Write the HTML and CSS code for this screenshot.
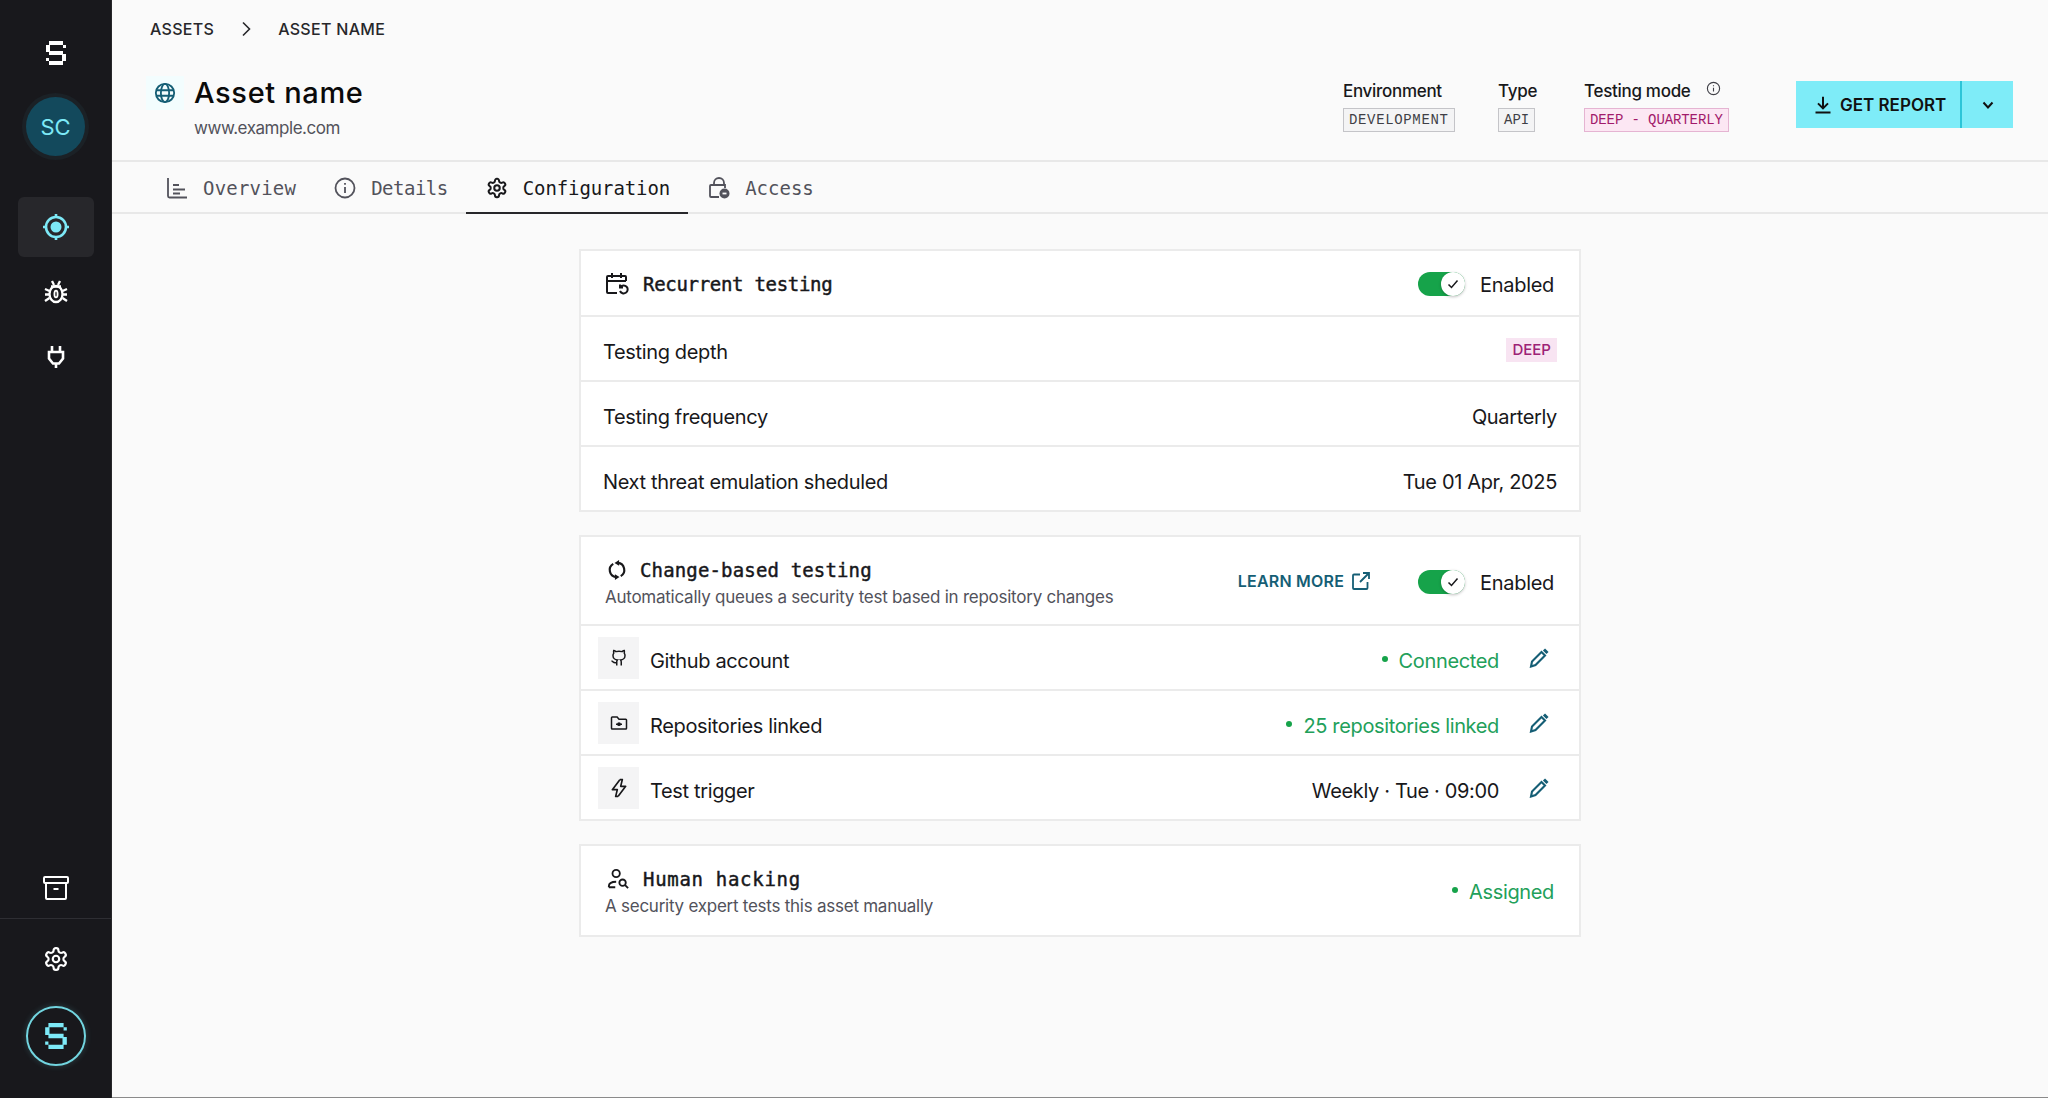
FILE: index.html
```html
<!DOCTYPE html>
<html lang="en">
<head>
<meta charset="utf-8">
<title>Asset name</title>
<link rel="stylesheet" href="styles.css">
</head>
<body>
<div class="app">
  <aside class="sidebar">
    <svg class="logo" viewBox="0 0 20 24" fill="#fff"><path d="M3 0h14v4H3zM17 4h3v3h-3zM0 4h4v7H0zM3 10h14v4H3zM16 13h4v7h-4zM0 17h3v3H0zM3 20h14v4H3z"/></svg>
    <div class="avatar">SC</div>
    <nav class="side-nav">
      <div class="side-item active">
        <svg viewBox="0 0 28 28" width="28" height="28" fill="none" stroke="#7de9f7" stroke-width="2.600"><circle cx="14" cy="14" r="10"/><circle cx="14" cy="14" r="5.500" fill="#7de9f7" stroke="none"/><path d="M14 1v3M14 24v3M1 14h3M24 14h3"/></svg>
      </div>
      <div class="side-item">
        <svg viewBox="0 0 24 24" width="24" height="24" fill="none" stroke="#fff" stroke-width="2.300"><path d="M8 1l2 4M16 1l-2 4"/><ellipse cx="12" cy="14" rx="6.500" ry="8"/><path d="M7 6.500h10M1 9l4.500 2M23 9l-4.500 2M1 14.500h4M23 14.500h-4M1 21l4.500-3M23 21l-4.500-3"/><ellipse cx="12" cy="14" rx="1.600" ry="3.400" stroke-width="1.800"/></svg>
      </div>
      <div class="side-item">
        <svg viewBox="0 0 24 24" width="24" height="24" fill="none" stroke="#fff" stroke-width="2.600"><path d="M8 1v6M16 1v6M5 7h14v6.500l-4 5h-6l-4-5zM12 18.500V23"/></svg>
      </div>
    </nav>
    <div class="side-archive">
      <svg viewBox="0 0 26 26" width="26" height="26" fill="none" stroke="#fff" stroke-width="2"><rect x="1" y="2" width="24" height="6" rx="1"/><path d="M3 8v15a1 1 0 0 0 1 1h18a1 1 0 0 0 1-1V8M10.500 14h5"/></svg>
    </div>
    <div class="side-bottom">
      <svg viewBox="0 0 24 24" width="26" height="26" fill="none" stroke="#fff" stroke-width="2" stroke-linejoin="round"><path d="M12.220 2h-.44a2 2 0 0 0-2 2v.18a2 2 0 0 1-1 1.730l-.43.25a2 2 0 0 1-2 0l-.15-.08a2 2 0 0 0-2.730.73l-.22.38a2 2 0 0 0 .73 2.730l.15.1a2 2 0 0 1 1 1.720v.51a2 2 0 0 1-1 1.740l-.15.09a2 2 0 0 0-.73 2.730l.22.38a2 2 0 0 0 2.730.73l.15-.08a2 2 0 0 1 2 0l.43.25a2 2 0 0 1 1 1.730V20a2 2 0 0 0 2 2h.44a2 2 0 0 0 2-2v-.18a2 2 0 0 1 1-1.730l.43-.25a2 2 0 0 1 2 0l.15.08a2 2 0 0 0 2.730-.73l.22-.39a2 2 0 0 0-.73-2.730l-.15-.08a2 2 0 0 1-1-1.740v-.5a2 2 0 0 1 1-1.740l.15-.09a2 2 0 0 0 .73-2.730l-.22-.38a2 2 0 0 0-2.730-.73l-.15.08a2 2 0 0 1-2 0l-.43-.25a2 2 0 0 1-1-1.730V4a2 2 0 0 0-2-2z"/><circle cx="12" cy="12" r="3"/></svg>
      <div class="brand-ring">
        <svg viewBox="0 0 20 24" width="22" height="26" fill="#7de9f7"><path d="M3 0h14v4H3zM17 4h3v3h-3zM0 4h4v7H0zM3 10h14v4H3zM16 13h4v7h-4zM0 17h3v3H0zM3 20h14v4H3z"/></svg>
      </div>
    </div>
  </aside>

  <main class="main">
    <div class="crumbs">
      <span>ASSETS</span>
      <svg viewBox="0 0 12 16" width="12" height="16" fill="none" stroke="#27272a" stroke-width="1.600"><path d="M3 1.500L9.500 8 3 14.500"/></svg>
      <span>ASSET NAME</span>
    </div>

    <header class="head">
      <div class="head-left">
        <div class="globe">
          <svg viewBox="0 0 24 24" width="22" height="22" fill="none" stroke="#155e75" stroke-width="2"><circle cx="12" cy="12" r="10"/><ellipse cx="12" cy="12" rx="4.500" ry="10"/><path d="M2.500 9h19M2.500 15h19"/></svg>
        </div>
        <div>
          <h1 class="title">Asset name</h1>
          <div class="url">www.example.com</div>
        </div>
      </div>
      <div class="meta">
        <div class="meta-col meta-env">
          <div class="meta-label">Environment</div>
          <span class="tag tag-env">DEVELOPMENT</span>
        </div>
        <div class="meta-col meta-type">
          <div class="meta-label">Type</div>
          <span class="tag">API</span>
        </div>
        <div class="meta-col meta-mode">
          <div class="meta-label">Testing mode
            <svg class="info" viewBox="0 0 16 16" width="15" height="15" fill="none" stroke="#3f3f46" stroke-width="1.200"><circle cx="8" cy="8" r="6.500"/><path d="M8 7.200v4M8 4.500v1.200"/></svg>
          </div>
          <span class="tag tag-pink">DEEP - QUARTERLY</span>
        </div>
      </div>
      <div class="report">
        <div class="report-main">
          <svg viewBox="0 0 24 24" width="20" height="20" fill="none" stroke="#111" stroke-width="2.400"><path d="M12 2v13M6 10l6 6 6-6M3 21h18"/></svg>
          GET REPORT
        </div>
        <div class="report-more">
          <svg viewBox="0 0 14 14" width="14" height="14" fill="none" stroke="#111" stroke-width="2"><path d="M2.500 4.500L7 9.500l4.500-5"/></svg>
        </div>
      </div>
    </header>

    <nav class="tabs">
      <div class="tab tab-overview">
        <svg viewBox="0 0 22 22" width="22" height="22" fill="none" stroke="#52525b" stroke-width="1.800"><path d="M2 1v18a1.500 1.500 0 0 0 1.500 1.500H21M7 8h6M7 12.500h12M7 16.500h7"/></svg>
        Overview
      </div>
      <div class="tab tab-details">
        <svg viewBox="0 0 22 22" width="22" height="22" fill="none" stroke="#52525b" stroke-width="1.800"><circle cx="11" cy="11" r="9.500"/><path d="M11 10v6M11 6v1.800"/></svg>
        Details
      </div>
      <div class="tab tab-active">
        <svg viewBox="0 0 24 24" width="22" height="22" fill="none" stroke="#18181b" stroke-width="2.200" stroke-linejoin="round"><path d="M12.220 2h-.44a2 2 0 0 0-2 2v.18a2 2 0 0 1-1 1.730l-.43.25a2 2 0 0 1-2 0l-.15-.08a2 2 0 0 0-2.730.73l-.22.38a2 2 0 0 0 .73 2.730l.15.1a2 2 0 0 1 1 1.720v.51a2 2 0 0 1-1 1.740l-.15.09a2 2 0 0 0-.73 2.730l.22.38a2 2 0 0 0 2.730.73l.15-.08a2 2 0 0 1 2 0l.43.25a2 2 0 0 1 1 1.730V20a2 2 0 0 0 2 2h.44a2 2 0 0 0 2-2v-.18a2 2 0 0 1 1-1.730l.43-.25a2 2 0 0 1 2 0l.15.08a2 2 0 0 0 2.730-.73l.22-.39a2 2 0 0 0-.73-2.730l-.15-.08a2 2 0 0 1-1-1.740v-.5a2 2 0 0 1 1-1.740l.15-.09a2 2 0 0 0 .73-2.730l-.22-.38a2 2 0 0 0-2.730-.73l-.15.08a2 2 0 0 1-2 0l-.43-.25a2 2 0 0 1-1-1.730V4a2 2 0 0 0-2-2z"/><circle cx="12" cy="12" r="3"/></svg>
        Configuration
      </div>
      <div class="tab">
        <svg viewBox="0 0 22 22" width="22" height="22" fill="none" stroke="#52525b" stroke-width="1.800"><path d="M6 8V6a5 5 0 0 1 10 0v2M11 20H3a1 1 0 0 1-1-1V9a1 1 0 0 1 1-1h14v3"/><circle cx="16.500" cy="16.500" r="5" fill="#52525b" stroke="none"/><path d="M14.500 16.500h4" stroke="#fafafa"/></svg>
        Access
      </div>
    </nav>

    <section class="content">
      <article class="card">
        <div class="card-head head-recurrent">
          <div class="head-title">
            <svg viewBox="0 0 24 24" width="24" height="24" fill="none" stroke="#18181b" stroke-width="2"><path d="M21 9V5a1 1 0 0 0-1-1H3a1 1 0 0 0-1 1v15a1 1 0 0 0 1 1h9M2 9h19M7 1v5M16 1v5"/><path d="M15.500 15a4 4 0 1 1-.5 4M15 12.500v3h3"/></svg>
            <h2 class="card-title title-recurrent">Recurrent testing</h2>
          </div>
          <div class="toggle-wrap">
            <span class="toggle"><span class="knob"><svg viewBox="0 0 12 12" width="12" height="12" fill="none" stroke="#18181b" stroke-width="1.500"><path d="M1.500 6.500l3 3 6-7"/></svg></span></span>
            <span class="value">Enabled</span>
          </div>
        </div>
        <div class="row">
          <span class="txt">Testing depth</span>
          <span class="tag-deep">DEEP</span>
        </div>
        <div class="row">
          <span class="txt">Testing frequency</span>
          <span class="txt">Quarterly</span>
        </div>
        <div class="row">
          <span class="txt">Next threat emulation sheduled</span>
          <span class="txt">Tue 01 Apr, 2025</span>
        </div>
      </article>

      <article class="card">
        <div class="card-head head-change">
          <div class="head-text">
            <div class="head-title">
              <svg class="ic-small" viewBox="0 0 24 24" width="20" height="20" fill="none" stroke="#18181b" stroke-width="2.600"><path d="M13 3.500A8.500 8.500 0 0 1 16.500 19.300M11 20.500A8.500 8.500 0 0 1 7.500 4.700"/><path d="M14.500 0L9 3.500 14.500 7zM9.500 24l5.500-3.500L9.500 17z" fill="#18181b" stroke="none"/></svg>
              <h2 class="card-title title-change">Change-based testing</h2>
            </div>
            <p class="sub">Automatically queues a security test based in repository changes</p>
          </div>
          <div class="head-actions">
            <span class="learn">LEARN MORE
              <svg viewBox="0 0 18 18" width="18" height="18" fill="none" stroke="#155e75" stroke-width="1.800"><path d="M8 2.500H2a1 1 0 0 0-1 1V16a1 1 0 0 0 1 1h12.500a1 1 0 0 0 1-1v-6M11 1h6v6M17 1L8 10"/></svg>
            </span>
            <div class="toggle-wrap">
              <span class="toggle"><span class="knob"><svg viewBox="0 0 12 12" width="12" height="12" fill="none" stroke="#18181b" stroke-width="1.500"><path d="M1.500 6.500l3 3 6-7"/></svg></span></span>
              <span class="value">Enabled</span>
            </div>
          </div>
        </div>
        <div class="row row-icon">
          <div class="row-left">
            <span class="icon-box"><svg viewBox="0 0 24 24" width="18" height="18" fill="none" stroke="#18181b" stroke-width="2"><path d="M15 22v-4a4.800 4.800 0 0 0-1-3.500c3 0 6-2 6-5.500.080-1.250-.27-2.480-1-3.500.28-1.150.28-2.350 0-3.500 0 0-1 0-3 1.500-2.640-.5-5.360-.5-8 0C6 2 5 2 5 2c-.3 1.150-.3 2.350 0 3.500A5.400 5.400 0 0 0 4 9c0 3.500 3 5.500 6 5.500-.39.490-.68 1.050-.85 1.650-.17.600-.22 1.230-.15 1.850v4M9 18c-4.510 2-5-2-7-2"/></svg></span>
            <span class="txt">Github account</span>
          </div>
          <div class="row-right">
            <span class="status txt"><i class="dot"></i>Connected</span>
            <svg class="pen" viewBox="0 0 20 20" width="20" height="20" fill="none" stroke="#155e75" stroke-width="2.100"><path d="M2 18.500l1-5L12.500 4l3.500 3.500L6.500 17z"/><path d="M15 1.500l3.500 3.500" stroke-width="3"/></svg>
          </div>
        </div>
        <div class="row row-icon">
          <div class="row-left">
            <span class="icon-box"><svg viewBox="0 0 24 24" width="18" height="18" fill="none" stroke="#18181b" stroke-width="2"><path d="M3 20h18a1 1 0 0 0 1-1V8a1 1 0 0 0-1-1h-9L9.500 4H3a1 1 0 0 0-1 1v14a1 1 0 0 0 1 1zM8 13.500h8"/><circle cx="12" cy="13.500" r="1.500" fill="#18181b"/></svg></span>
            <span class="txt">Repositories linked</span>
          </div>
          <div class="row-right">
            <span class="status txt"><i class="dot"></i>25 repositories linked</span>
            <svg class="pen" viewBox="0 0 20 20" width="20" height="20" fill="none" stroke="#155e75" stroke-width="2.100"><path d="M2 18.500l1-5L12.500 4l3.500 3.500L6.500 17z"/><path d="M15 1.500l3.500 3.500" stroke-width="3"/></svg>
          </div>
        </div>
        <div class="row row-icon">
          <div class="row-left">
            <span class="icon-box"><svg viewBox="0 0 24 24" width="20" height="20" fill="none" stroke="#18181b" stroke-width="2" stroke-linejoin="round"><path d="M13 2L4 14h6l-2 8 3 0M11 22l9-12h-6l2-8h-3"/></svg></span>
            <span class="txt">Test trigger</span>
          </div>
          <div class="row-right">
            <span class="txt">Weekly · Tue · 09:00</span>
            <svg class="pen" viewBox="0 0 20 20" width="20" height="20" fill="none" stroke="#155e75" stroke-width="2.100"><path d="M2 18.500l1-5L12.500 4l3.500 3.500L6.500 17z"/><path d="M15 1.500l3.500 3.500" stroke-width="3"/></svg>
          </div>
        </div>
      </article>

      <article class="card">
        <div class="card-head head-human">
          <div class="head-text">
            <div class="head-title">
              <svg class="ic-small" viewBox="0 0 24 24" width="22" height="22" fill="none" stroke="#18181b" stroke-width="2"><circle cx="10" cy="6" r="4"/><path d="M2 21v-1c0-3 3-5 8-5M2 21h7"/><circle cx="17" cy="16" r="3.500"/><path d="M19.500 18.500L23 22"/></svg>
              <h2 class="card-title title-human">Human hacking</h2>
            </div>
            <p class="sub">A security expert tests this asset manually</p>
          </div>
          <span class="status status-assigned"><i class="dot"></i>Assigned</span>
        </div>
      </article>
    </section>
  </main>
</div>
</body>
</html>
```
FILE: styles.css
```css
* { box-sizing: border-box; }
html, body { margin: 0; height: 100%; }
body {
  font-family: "Inter", "Liberation Sans", sans-serif;
  color: #18181b;
  background: #fafafa;
  overflow: hidden;
}
.app { display: flex; height: 1098px; }

.sidebar {
  width: 112px;
  flex: none;
  background: #18181c;
  display: flex;
  flex-direction: column;
  align-items: center;
  padding-top: 41px;
  border-right: 1px solid #27272a;
}
.logo { width: 20px; height: 24px; display: block; }
.avatar {
  width: 59px;
  height: 59px;
  margin-top: 32px;
  border-radius: 50%;
  background: #13495c;
  color: #7de9f7;
  box-shadow: 0 0 0 4px #1b2126;
  font-size: 22px;
  display: flex;
  align-items: center;
  justify-content: center;
}
.side-nav { margin-top: 41px; display: flex; flex-direction: column; align-items: center; width: 100%; }
.side-item {
  width: 76px;
  height: 60px;
  margin-bottom: 5px;
  display: flex;
  align-items: center;
  justify-content: center;
  border-radius: 6px;
}
.side-item.active { background: #27272b; }
.side-archive {
  margin-top: auto;
  width: 100%;
  display: flex;
  justify-content: center;
  padding-bottom: 17px;
  border-bottom: 1px solid #2e2e33;
}
.side-bottom { display: flex; flex-direction: column; align-items: center; padding: 27px 0 32px; gap: 34px; }
.brand-ring {
  width: 60px;
  height: 60px;
  border-radius: 50%;
  border: 2px solid #72d5e0;
  box-shadow: 0 0 6px rgba(125, 233, 247, .2);
  display: flex;
  align-items: center;
  justify-content: center;
}

.main { flex: 1; min-width: 0; border-bottom: 1px solid #8a8a8a; }

.crumbs {
  height: 58px;
  padding-left: 38px;
  display: flex;
  align-items: center;
  gap: 26px;
  font-size: 16px;
  font-weight: 500;
  letter-spacing: .3px;
  color: #27272a;
}

.head {
  height: 104px;
  display: flex;
  align-items: flex-start;
  padding: 18px 35px 0 34px;
  border-bottom: 2px solid #e8e8e8;
}
.head-left { display: flex; flex: 1; gap: 10px; }
.globe {
  width: 38px;
  height: 34px;
  background: #f3fdfe;
  display: flex;
  align-items: center;
  justify-content: center;
}
.title {
  margin: 0;
  font-size: 29px;
  font-weight: 500;
  line-height: 34px;
  color: #0a0a0a;
  letter-spacing: .65px;
}
.url { margin-top: 7px; font-size: 17px; line-height: 22px; color: #52525b; letter-spacing: -.45px; }

.meta { display: flex; margin-top: 3px; }
.meta-col { display: flex; flex-direction: column; align-items: flex-start; }
.meta-env { width: 155px; }
.meta-type { width: 86px; }
.meta-mode { width: 212px; }
.meta-label {
  font-size: 17px;
  font-weight: 500;
  line-height: 24px;
  height: 29px;
  letter-spacing: -.3px;
  color: #18181b;
  white-space: nowrap;
}
.info { margin-left: 11px; vertical-align: 1px; }
.tag {
  height: 24px;
  padding: 0 5px;
  border: 1px solid #c4c4c8;
  background: #f4f4f5;
  font-family: "Liberation Mono", monospace;
  font-size: 14px;
  line-height: 22px;
  color: #3f3f46;
  white-space: nowrap;
}
.tag-env { letter-spacing: .65px; }
.tag-pink { background: #fce7f3; border-color: #e5b4d2; color: #a21a6b; letter-spacing: -.1px; }

.report {
  width: 217px;
  height: 47px;
  margin-top: 5px;
  display: flex;
  background: #7eecf8;
  font-size: 17px;
  font-weight: 600;
  color: #111;
  flex: none;
}
.report-main {
  flex: 1;
  display: flex;
  align-items: center;
  gap: 7px;
  padding-left: 17px;
  border-right: 2px solid #2cc5d8;
}
.report-more { width: 51px; display: flex; align-items: center; justify-content: center; }

.tabs {
  height: 52px;
  display: flex;
  padding-left: 34px;
  border-bottom: 2px solid #e8e8e8;
}
.tab {
  height: 52px;
  padding: 2px 18px 0 20px;
  display: flex;
  align-items: center;
  gap: 15px;
  font-family: "DejaVu Sans Mono", monospace;
  font-size: 19px;
  color: #52525b;
  border-bottom: 2px solid transparent;
}
.tab-overview { letter-spacing: .2px; }
.tab-details { letter-spacing: -.5px; }
.tab-active { color: #18181b; border-bottom-color: #27272a; letter-spacing: -.1px; }

.content { width: 1002px; margin: 35px auto 0; display: flex; flex-direction: column; gap: 23px; }
.card {
  background: #fff;
  border: 2px solid #ebebeb;
}
.card-head { display: flex; justify-content: space-between; align-items: center; padding: 0 24px; border-bottom: 2px solid #ebebeb; }
.card > :last-child { border-bottom: 0; }
.head-recurrent { height: 66px; padding-top: 2px; }
.head-change { height: 89px; padding-top: 3px; }
.head-human { height: 89px; padding-top: 2px; }
.head-title { display: flex; align-items: center; gap: 14px; }
.ic-small { margin-left: 2px; }
.head-change .head-title { gap: 13px; }
.card-title {
  margin: 0;
  font-family: "DejaVu Sans Mono", monospace;
  font-size: 19px;
  font-weight: 400;
  line-height: 26px;
  color: #18181b;
  -webkit-text-stroke: .45px #18181b;
}
.title-recurrent { letter-spacing: -.3px; }
.title-change { letter-spacing: .15px; }
.title-human { letter-spacing: .7px; }
.sub { margin: 3px 0 0; font-size: 17px; line-height: 22px; color: #52525b; letter-spacing: -.25px; }
.head-actions { display: flex; align-items: center; gap: 48px; }
.learn {
  display: flex;
  align-items: center;
  gap: 8px;
  font-size: 16px;
  font-weight: 600;
  letter-spacing: .2px;
  color: #155e75;
  margin-top: -2px;
}
.toggle-wrap { display: flex; align-items: center; gap: 15px; font-size: 20px; }
.toggle {
  width: 47px;
  height: 24px;
  background: #16a34a;
  border-radius: 12px;
  display: flex;
  justify-content: flex-end;
}
.knob {
  width: 24px;
  height: 24px;
  background: #fff;
  border-radius: 50%;
  box-shadow: 0 1px 3px rgba(0, 0, 0, .25);
  display: flex;
  align-items: center;
  justify-content: center;
}
.value { letter-spacing: -.3px; padding-top: 2px; margin-right: 1px; }
.row {
  height: 65px;
  display: flex;
  justify-content: space-between;
  align-items: center;
  padding: 0 22px;
  font-size: 20px;
  letter-spacing: -.35px;
  border-bottom: 2px solid #ebebeb;
}
.row:last-child { height: 63px; }
.txt { padding-top: 6px; }
.tag-deep {
  height: 24px;
  margin-top: 2px;
  padding: 0 6px;
  background: #f8e4f2;
  color: #9d2275;
  font-size: 15px;
  font-weight: 500;
  line-height: 24px;
  letter-spacing: 0;
}
.row-icon { padding: 0 30px 0 17px; }
.row-left { display: flex; align-items: center; gap: 11px; }
.icon-box {
  width: 41px;
  height: 42px;
  background: #f4f4f5;
  display: flex;
  align-items: center;
  justify-content: center;
}
.row-right { display: flex; align-items: center; gap: 30px; }
.status { display: flex; align-items: center; gap: 11px; color: #22a05a; }
.status-assigned { font-size: 20px; letter-spacing: -.35px; margin-top: 1px; margin-right: 1px; }
.dot { width: 6px; height: 6px; border-radius: 50%; background: #16a34a; display: block; margin-top: -4px; }
.pen { flex: none; margin-top: 1px; }
```
